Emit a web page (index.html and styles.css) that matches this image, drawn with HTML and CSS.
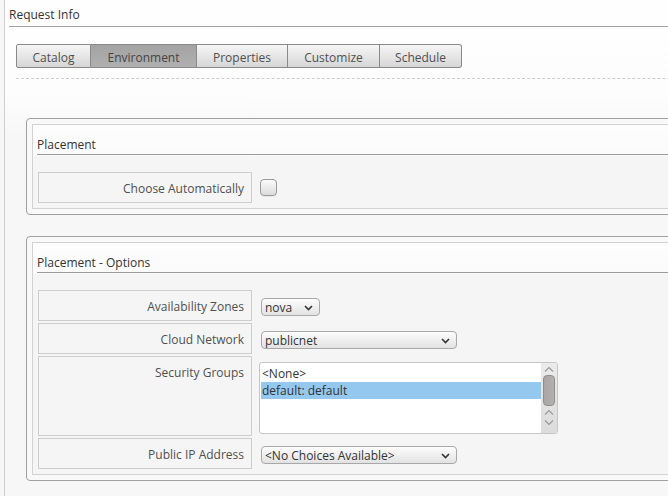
FILE: index.html
```html
<!DOCTYPE html>
<html>
<head>
<meta charset="utf-8">
<link rel="stylesheet" href="styles.css">
</head>
<body>
<div class="page">
  <div class="title">Request Info</div>
  <div class="content">
    <div class="tabbar">
      <div class="tabs">
        <div class="tab t1">Catalog</div>
        <div class="tab t2 active">Environment</div>
        <div class="tab t3">Properties</div>
        <div class="tab t4">Customize</div>
        <div class="tab t5">Schedule</div>
      </div>
    </div>
    <div class="panels">
      <div class="panel">
        <div class="panel-inner">
          <div class="panel-head">Placement</div>
          <div class="fields">
            <div class="row">
              <div class="label">Choose Automatically</div>
              <div class="value check"><span class="checkbox"></span></div>
            </div>
          </div>
        </div>
      </div>
      <div class="panel">
        <div class="panel-inner">
          <div class="panel-head">Placement - Options</div>
          <div class="fields">
            <div class="row">
              <div class="label">Availability Zones</div>
              <div class="value">
                <div class="select small"><span class="sel-text">nova</span>
                  <svg class="chev" width="9" height="6" viewBox="0 0 9 6"><path d="M1 1 L4.5 4.5 L8 1" fill="none" stroke="#333" stroke-width="1.6"/></svg>
                </div>
              </div>
            </div>
            <div class="row">
              <div class="label">Cloud Network</div>
              <div class="value">
                <div class="select wide"><span class="sel-text">publicnet</span>
                  <svg class="chev" width="9" height="6" viewBox="0 0 9 6"><path d="M1 1 L4.5 4.5 L8 1" fill="none" stroke="#333" stroke-width="1.6"/></svg>
                </div>
              </div>
            </div>
            <div class="row tall">
              <div class="label">Security Groups</div>
              <div class="value list">
                <div class="listbox">
                  <div class="options">
                    <div class="opt">&lt;None&gt;</div>
                    <div class="opt selected">default: default</div>
                  </div>
                  <div class="scrollbar">
                    <svg class="arrow" width="10" height="7" viewBox="0 0 10 7"><path d="M1 5.5 L5 1.5 L9 5.5" fill="none" stroke="#9a9a9a" stroke-width="1.2"/></svg>
                    <div class="thumb"></div>
                    <svg class="arrow" width="10" height="7" viewBox="0 0 10 7"><path d="M1 5.5 L5 1.5 L9 5.5" fill="none" stroke="#9a9a9a" stroke-width="1.2"/></svg>
                    <svg class="arrow" width="10" height="7" viewBox="0 0 10 7"><path d="M1 1.5 L5 5.5 L9 1.5" fill="none" stroke="#9a9a9a" stroke-width="1.2"/></svg>
                  </div>
                </div>
              </div>
            </div>
            <div class="row">
              <div class="label">Public IP Address</div>
              <div class="value">
                <div class="select wide"><span class="sel-text">&lt;No Choices Available&gt;</span>
                  <svg class="chev" width="9" height="6" viewBox="0 0 9 6"><path d="M1 1 L4.5 4.5 L8 1" fill="none" stroke="#333" stroke-width="1.6"/></svg>
                </div>
              </div>
            </div>
          </div>
        </div>
      </div>
    </div>
  </div>
</div>
</body>
</html>
```

FILE: styles.css
```css
html, body {
  margin: 0;
  padding: 0;
}
body {
  width: 668px;
  height: 496px;
  overflow: hidden;
  background: #f7f7f7;
  font-family: "Open Sans", "DejaVu Sans", sans-serif;
  font-size: 12px;
  color: #555;
}
.page {
  margin-left: 4px;
  border-left: 1px solid #cfcfcf;
  height: 496px;
  overflow: hidden;
  background: linear-gradient(#fefefe 0, #fdfdfd 95px, #f7f7f7 135px);
}
.title {
  margin-left: 4px;
  padding: 6px 0 3px;
  line-height: 17px;
  border-bottom: 1px solid #a3a3a3;
  color: #333;
  width: 900px;
}
.content {
  padding: 17px 0 0 11px;
}
.tabbar {
  padding-bottom: 10px;
  border-bottom: 1px dashed #cdcdcd;
  width: 900px;
}
.tabs {
  display: flex;
}
.tab {
  box-sizing: border-box;
  height: 24px;
  line-height: 22px;
  padding-top: 2px;
  text-align: center;
  border: 1px solid #8a8a8a;
  border-left: none;
  background: linear-gradient(#f6f6f6, #d6d6d6);
  color: #505050;
}
.tab.t1 { border-left: 1px solid #8a8a8a; width: 75px; border-radius: 2px 0 0 2px; }
.tab.t2 { width: 106px; }
.tab.t3 { width: 91px; }
.tab.t4 { width: 92px; }
.tab.t5 { width: 82px; border-radius: 0 3px 3px 0; }
.tab.active {
  background: linear-gradient(#a3a3a3, #b0b0b0);
  color: #444;
}
.panels {
  padding: 39px 0 0 10px;
}
.panel {
  width: 720px;
  border: 1px solid #a0a0a0;
  border-radius: 4px;
  padding: 5px;
  margin-bottom: 21px;
  background: #f9f9f9;
}
.panel-inner {
  border: 1px solid #d2d2d2;
  background: linear-gradient(#fdfdfd 0, #fbfbfb 31px, #f5f5f5 31px);
}
.panel-head {
  margin-left: 4px;
  height: 30px;
  box-sizing: border-box;
  padding-top: 11px;
  line-height: 17px;
  border-bottom: 1px solid #9a9a9a;
  color: #333;
}
.fields {
  display: flex;
  flex-direction: column;
  gap: 2px;
  padding: 17px 0 5px 5px;
}
.row {
  display: flex;
  height: 31px;
}
.row.tall {
  height: 80px;
}
.label {
  box-sizing: border-box;
  width: 214px;
  border: 1px solid #cdcdcd;
  text-align: right;
  padding: 7px 7px 0 0;
  line-height: 17px;
  color: #505050;
}
.value {
  padding: 8px 0 0 9px;
}
.value.check {
  padding: 7px 0 0 8px;
}
.value.list {
  padding: 6px 0 0 7px;
}
.checkbox {
  display: block;
  box-sizing: border-box;
  width: 17px;
  height: 17px;
  border: 1px solid #9a9a9a;
  border-radius: 4px;
  background: linear-gradient(#fafafa, #dcdcdc);
  box-shadow: 0 1px 0 #e8e8e8;
}
.select {
  position: relative;
  box-sizing: border-box;
  height: 18px;
  border: 1px solid #a8a8a8;
  border-radius: 4px;
  background: linear-gradient(#fdfdfd, #e2e2e2);
  line-height: 18px;
  color: #333;
  padding-left: 3px;
}
.select.small { width: 59px; }
.select.wide { width: 196px; }
.chev {
  position: absolute;
  right: 6px;
  top: 6px;
}
.listbox {
  display: flex;
  box-sizing: border-box;
  width: 299px;
  height: 72px;
  border: 1px solid #c6c6c6;
  border-radius: 3px;
  background: #fff;
  overflow: hidden;
}
.options {
  flex: 1;
  padding-top: 2px;
  padding-left: 1px;
  color: #333;
}
.opt {
  height: 17px;
  line-height: 17px;
  padding-left: 1px;
}
.opt.selected {
  background: #95c8ef;
}
.scrollbar {
  width: 16px;
  background: linear-gradient(#ebebeb, #dcdcdc);
  display: flex;
  flex-direction: column;
  align-items: center;
}
.arrow {
  display: block;
  margin-top: 3px;
}
.thumb {
  box-sizing: border-box;
  width: 12px;
  height: 31px;
  margin-top: 2px;
  border: 1px solid #8e8e8e;
  border-radius: 4px;
  background: linear-gradient(90deg, #aba6a6, #b5b0b0);
}
```
